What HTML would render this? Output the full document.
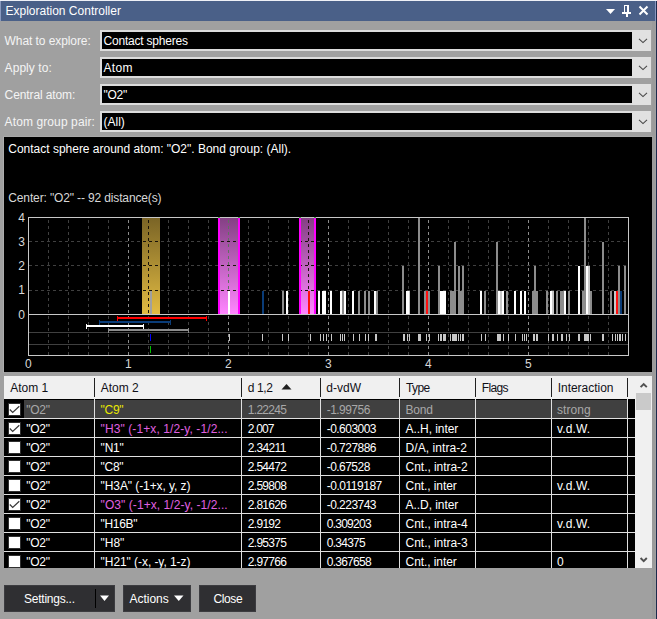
<!DOCTYPE html>
<html><head><meta charset="utf-8"><title>Exploration Controller</title>
<style>
html,body{margin:0;padding:0;background:#a0a0a0;}
body{width:657px;height:619px;background:#a0a0a0;position:relative;overflow:hidden;font-family:"Liberation Sans",sans-serif;font-size:12px;}
.a{position:absolute;}
.t{position:absolute;white-space:nowrap;line-height:16px;height:16px;font-size:12px;}
.cb{position:absolute;left:100px;width:551px;height:21px;background:#dcdcdc;}
.cb i{position:absolute;left:2px;top:2px;width:530px;height:17px;background:#000;}
.cb b{position:absolute;left:532px;top:0;width:19px;height:21px;background:#e1e1e1;}
.btn{position:absolute;top:585px;height:27px;background:#2f2f32;box-sizing:border-box;border:1px solid #3c3c40;}
.chk{position:absolute;left:8px;width:13px;height:13px;background:#fff;box-sizing:border-box;border:1px solid #303030;}
</style></head><body>

<div class="a" style="left:0;top:0;width:657px;height:1px;background:#eef0f6"></div>
<div class="a" style="left:0;top:1px;width:656px;height:20px;background:#4a6088"></div>
<div class="a" style="left:0;top:1px;width:1px;height:20px;background:#8a9abf"></div>
<div class="a" style="left:652px;top:21px;width:3px;height:598px;background:#9b9b9b"></div>
<div class="a" style="left:655px;top:1px;width:1px;height:20px;background:#8896c0"></div>
<div class="a" style="left:656px;top:1px;width:1px;height:618px;background:#1c2a4c"></div>
<svg class="a" style="left:600px;top:0" width="56" height="22" viewBox="0 0 56 22">
<polygon points="6,9 15,9 10.5,14" fill="#fff"/>
<g fill="#fff" shape-rendering="crispEdges">
<rect x="24" y="5" width="5" height="1"/><rect x="24" y="5" width="1" height="8"/><rect x="27" y="5" width="2" height="8"/>
<rect x="22" y="12" width="9" height="1.5"/><rect x="26" y="13" width="1.5" height="4"/></g>
<path d="M39.5 6.5 L47.5 14.5 M47.5 6.5 L39.5 14.5" stroke="#fff" stroke-width="2" fill="none"/>
</svg>
<div class="cb" style="top:30px"><i></i><b><svg width="19" height="21" viewBox="0 0 19 21"><path d="M7 8.8 L11 12.6 L15 8.8" stroke="#484848" stroke-width="1.1" fill="none"/></svg></b></div>
<div class="cb" style="top:57px"><i></i><b><svg width="19" height="21" viewBox="0 0 19 21"><path d="M7 8.8 L11 12.6 L15 8.8" stroke="#484848" stroke-width="1.1" fill="none"/></svg></b></div>
<div class="cb" style="top:84px"><i></i><b><svg width="19" height="21" viewBox="0 0 19 21"><path d="M7 8.8 L11 12.6 L15 8.8" stroke="#484848" stroke-width="1.1" fill="none"/></svg></b></div>
<div class="cb" style="top:111px"><i></i><b><svg width="19" height="21" viewBox="0 0 19 21"><path d="M7 8.8 L11 12.6 L15 8.8" stroke="#484848" stroke-width="1.1" fill="none"/></svg></b></div>
<div class="a" style="left:3px;top:136px;width:1px;height:237px;background:#adadad"></div>
<div class="a" style="left:3px;top:136px;width:650px;height:1px;background:#a8a8a8"></div>
<div class="a" style="left:4px;top:137px;width:648px;height:235px;background:#000"></div>
<svg class="a" style="left:0;top:0" width="657" height="619" viewBox="0 0 657 619" shape-rendering="crispEdges"><defs>
<linearGradient id="gy" x1="0" y1="0" x2="0" y2="1"><stop offset="0" stop-color="#7a6426"/><stop offset="1" stop-color="#e2bb42"/></linearGradient>
<linearGradient id="gm" x1="0" y1="0" x2="0" y2="1"><stop offset="0" stop-color="#844084"/><stop offset="1" stop-color="#ff86ff"/></linearGradient>
</defs><g><line x1="48.5" y1="220" x2="48.5" y2="355" stroke="#404040" stroke-dasharray="3,3"/><line x1="68.5" y1="220" x2="68.5" y2="355" stroke="#404040" stroke-dasharray="3,3"/><line x1="88.5" y1="220" x2="88.5" y2="355" stroke="#404040" stroke-dasharray="3,3"/><line x1="108.5" y1="220" x2="108.5" y2="355" stroke="#404040" stroke-dasharray="3,3"/><line x1="128.5" y1="220" x2="128.5" y2="355" stroke="#8c8c8c" stroke-dasharray="3,3"/><line x1="148.5" y1="220" x2="148.5" y2="355" stroke="#404040" stroke-dasharray="3,3"/><line x1="168.5" y1="220" x2="168.5" y2="355" stroke="#404040" stroke-dasharray="3,3"/><line x1="188.5" y1="220" x2="188.5" y2="355" stroke="#404040" stroke-dasharray="3,3"/><line x1="208.5" y1="220" x2="208.5" y2="355" stroke="#404040" stroke-dasharray="3,3"/><line x1="228.5" y1="220" x2="228.5" y2="355" stroke="#8c8c8c" stroke-dasharray="3,3"/><line x1="248.5" y1="220" x2="248.5" y2="355" stroke="#404040" stroke-dasharray="3,3"/><line x1="268.5" y1="220" x2="268.5" y2="355" stroke="#404040" stroke-dasharray="3,3"/><line x1="288.5" y1="220" x2="288.5" y2="355" stroke="#404040" stroke-dasharray="3,3"/><line x1="308.5" y1="220" x2="308.5" y2="355" stroke="#404040" stroke-dasharray="3,3"/><line x1="328.5" y1="220" x2="328.5" y2="355" stroke="#8c8c8c" stroke-dasharray="3,3"/><line x1="348.5" y1="220" x2="348.5" y2="355" stroke="#404040" stroke-dasharray="3,3"/><line x1="368.5" y1="220" x2="368.5" y2="355" stroke="#404040" stroke-dasharray="3,3"/><line x1="388.5" y1="220" x2="388.5" y2="355" stroke="#404040" stroke-dasharray="3,3"/><line x1="408.5" y1="220" x2="408.5" y2="355" stroke="#404040" stroke-dasharray="3,3"/><line x1="428.5" y1="220" x2="428.5" y2="355" stroke="#8c8c8c" stroke-dasharray="3,3"/><line x1="448.5" y1="220" x2="448.5" y2="355" stroke="#404040" stroke-dasharray="3,3"/><line x1="468.5" y1="220" x2="468.5" y2="355" stroke="#404040" stroke-dasharray="3,3"/><line x1="488.5" y1="220" x2="488.5" y2="355" stroke="#404040" stroke-dasharray="3,3"/><line x1="508.5" y1="220" x2="508.5" y2="355" stroke="#404040" stroke-dasharray="3,3"/><line x1="528.5" y1="220" x2="528.5" y2="355" stroke="#8c8c8c" stroke-dasharray="3,3"/><line x1="548.5" y1="220" x2="548.5" y2="355" stroke="#404040" stroke-dasharray="3,3"/><line x1="568.5" y1="220" x2="568.5" y2="355" stroke="#404040" stroke-dasharray="3,3"/><line x1="588.5" y1="220" x2="588.5" y2="355" stroke="#404040" stroke-dasharray="3,3"/><line x1="608.5" y1="220" x2="608.5" y2="355" stroke="#404040" stroke-dasharray="3,3"/><line x1="29" y1="290.5" x2="628" y2="290.5" stroke="#404040" stroke-dasharray="3,3"/><line x1="29" y1="265.5" x2="628" y2="265.5" stroke="#404040" stroke-dasharray="3,3"/><line x1="29" y1="241.5" x2="628" y2="241.5" stroke="#404040" stroke-dasharray="3,3"/></g><rect x="142" y="218" width="18" height="96" fill="url(#gy)"/><rect x="218" y="218" width="22" height="96" fill="url(#gm)"/><rect x="218" y="218" width="2" height="96" fill="#ff00ff"/><rect x="238" y="218" width="2" height="96" fill="#ff00ff"/><rect x="299" y="218" width="17" height="96" fill="url(#gm)"/><rect x="299" y="218" width="2" height="96" fill="#ff00ff"/><rect x="314" y="218" width="2" height="96" fill="#ff00ff"/><defs><clipPath id="cpb"><rect x="142" y="218" width="18" height="96"/><rect x="220" y="218" width="18" height="96"/><rect x="301" y="218" width="13" height="96"/></clipPath></defs><g clip-path="url(#cpb)"><line x1="48.5" y1="220" x2="48.5" y2="355" stroke="#181208" stroke-dasharray="3,3"/><line x1="68.5" y1="220" x2="68.5" y2="355" stroke="#181208" stroke-dasharray="3,3"/><line x1="88.5" y1="220" x2="88.5" y2="355" stroke="#181208" stroke-dasharray="3,3"/><line x1="108.5" y1="220" x2="108.5" y2="355" stroke="#181208" stroke-dasharray="3,3"/><line x1="128.5" y1="220" x2="128.5" y2="355" stroke="#607060" stroke-dasharray="3,3"/><line x1="148.5" y1="220" x2="148.5" y2="355" stroke="#181208" stroke-dasharray="3,3"/><line x1="168.5" y1="220" x2="168.5" y2="355" stroke="#181208" stroke-dasharray="3,3"/><line x1="188.5" y1="220" x2="188.5" y2="355" stroke="#181208" stroke-dasharray="3,3"/><line x1="208.5" y1="220" x2="208.5" y2="355" stroke="#181208" stroke-dasharray="3,3"/><line x1="228.5" y1="220" x2="228.5" y2="355" stroke="#607060" stroke-dasharray="3,3"/><line x1="248.5" y1="220" x2="248.5" y2="355" stroke="#181208" stroke-dasharray="3,3"/><line x1="268.5" y1="220" x2="268.5" y2="355" stroke="#181208" stroke-dasharray="3,3"/><line x1="288.5" y1="220" x2="288.5" y2="355" stroke="#181208" stroke-dasharray="3,3"/><line x1="308.5" y1="220" x2="308.5" y2="355" stroke="#181208" stroke-dasharray="3,3"/><line x1="328.5" y1="220" x2="328.5" y2="355" stroke="#607060" stroke-dasharray="3,3"/><line x1="348.5" y1="220" x2="348.5" y2="355" stroke="#181208" stroke-dasharray="3,3"/><line x1="368.5" y1="220" x2="368.5" y2="355" stroke="#181208" stroke-dasharray="3,3"/><line x1="388.5" y1="220" x2="388.5" y2="355" stroke="#181208" stroke-dasharray="3,3"/><line x1="408.5" y1="220" x2="408.5" y2="355" stroke="#181208" stroke-dasharray="3,3"/><line x1="428.5" y1="220" x2="428.5" y2="355" stroke="#607060" stroke-dasharray="3,3"/><line x1="448.5" y1="220" x2="448.5" y2="355" stroke="#181208" stroke-dasharray="3,3"/><line x1="468.5" y1="220" x2="468.5" y2="355" stroke="#181208" stroke-dasharray="3,3"/><line x1="488.5" y1="220" x2="488.5" y2="355" stroke="#181208" stroke-dasharray="3,3"/><line x1="508.5" y1="220" x2="508.5" y2="355" stroke="#181208" stroke-dasharray="3,3"/><line x1="528.5" y1="220" x2="528.5" y2="355" stroke="#607060" stroke-dasharray="3,3"/><line x1="548.5" y1="220" x2="548.5" y2="355" stroke="#181208" stroke-dasharray="3,3"/><line x1="568.5" y1="220" x2="568.5" y2="355" stroke="#181208" stroke-dasharray="3,3"/><line x1="588.5" y1="220" x2="588.5" y2="355" stroke="#181208" stroke-dasharray="3,3"/><line x1="608.5" y1="220" x2="608.5" y2="355" stroke="#181208" stroke-dasharray="3,3"/><line x1="29" y1="290.5" x2="628" y2="290.5" stroke="#181208" stroke-dasharray="3,3"/><line x1="29" y1="265.5" x2="628" y2="265.5" stroke="#181208" stroke-dasharray="3,3"/><line x1="29" y1="241.5" x2="628" y2="241.5" stroke="#181208" stroke-dasharray="3,3"/></g><rect x="150" y="291" width="2" height="23" fill="#a0a0a0"/><rect x="228" y="291" width="2" height="23" fill="#ffffff"/><rect x="262" y="291" width="2" height="23" fill="#0a3c78"/><rect x="282" y="291" width="2" height="23" fill="#8c8c8c"/><rect x="286" y="291" width="2" height="23" fill="#ffffff"/><rect x="308" y="291" width="2" height="23" fill="#ff1010"/><rect x="318" y="291" width="2" height="23" fill="#ffffff"/><rect x="322" y="291" width="4" height="23" fill="#ffffff"/><rect x="330" y="291" width="2" height="23" fill="#ffffff"/><rect x="340" y="291" width="2" height="23" fill="#ffffff"/><rect x="342" y="291" width="2" height="23" fill="#8c8c8c"/><rect x="344" y="291" width="2" height="23" fill="#ffffff"/><rect x="352" y="291" width="2" height="23" fill="#ffffff"/><rect x="358" y="291" width="2" height="23" fill="#8c8c8c"/><rect x="364" y="291" width="2" height="23" fill="#8c8c8c"/><rect x="368" y="291" width="2" height="23" fill="#8c8c8c"/><rect x="374" y="291" width="2" height="23" fill="#ffffff"/><rect x="376" y="291" width="2" height="23" fill="#8c8c8c"/><rect x="402" y="266" width="2" height="48" fill="#8c8c8c"/><rect x="406" y="291" width="3" height="23" fill="#ffffff"/><rect x="409" y="291" width="1" height="23" fill="#c8c8c8"/><rect x="418" y="218" width="2" height="96" fill="#8c8c8c"/><rect x="424" y="291" width="2" height="23" fill="#8c8c8c"/><rect x="426" y="291" width="2" height="23" fill="#ff1010"/><rect x="428" y="291" width="2" height="23" fill="#8c8c8c"/><rect x="438" y="266" width="2" height="48" fill="#8c8c8c"/><rect x="440" y="291" width="6" height="23" fill="#ffffff"/><rect x="450" y="291" width="6" height="23" fill="#8c8c8c"/><rect x="458" y="291" width="6" height="23" fill="#8c8c8c"/><rect x="454" y="242" width="2" height="72" fill="#8c8c8c"/><rect x="458" y="266" width="2" height="48" fill="#8c8c8c"/><rect x="462" y="266" width="2" height="48" fill="#8c8c8c"/><rect x="480" y="291" width="2" height="23" fill="#ffffff"/><rect x="484" y="291" width="2" height="23" fill="#8c8c8c"/><rect x="496" y="242" width="2" height="72" fill="#8c8c8c"/><rect x="498" y="291" width="2" height="23" fill="#ffffff"/><rect x="500" y="291" width="2" height="23" fill="#c8c8c8"/><rect x="502" y="291" width="2" height="23" fill="#ffffff"/><rect x="506" y="291" width="2" height="23" fill="#8c8c8c"/><rect x="514" y="291" width="2" height="23" fill="#ffffff"/><rect x="520" y="291" width="2" height="23" fill="#ffffff"/><rect x="524" y="291" width="2" height="23" fill="#ffffff"/><rect x="532" y="291" width="6" height="23" fill="#8c8c8c"/><rect x="534" y="266" width="2" height="48" fill="#8c8c8c"/><rect x="546" y="291" width="2" height="23" fill="#8c8c8c"/><rect x="550" y="291" width="2" height="23" fill="#ffffff"/><rect x="552" y="291" width="2" height="23" fill="#c8c8c8"/><rect x="556" y="291" width="2" height="23" fill="#8c8c8c"/><rect x="560" y="291" width="4" height="23" fill="#8c8c8c"/><rect x="564" y="291" width="2" height="23" fill="#ffffff"/><rect x="568" y="291" width="2" height="23" fill="#8c8c8c"/><rect x="578" y="266" width="2" height="48" fill="#ffffff"/><rect x="582" y="291" width="10" height="23" fill="#8c8c8c"/><rect x="584" y="218" width="2" height="96" fill="#8c8c8c"/><rect x="586" y="266" width="2" height="48" fill="#ffffff"/><rect x="588" y="266" width="2" height="48" fill="#c8c8c8"/><rect x="602" y="242" width="2" height="72" fill="#8c8c8c"/><rect x="610" y="291" width="2" height="23" fill="#8c8c8c"/><rect x="614" y="291" width="2" height="23" fill="#c8c8c8"/><rect x="616" y="291" width="2" height="23" fill="#ff1010"/><rect x="618" y="266" width="2" height="48" fill="#8c8c8c"/><rect x="620" y="291" width="2" height="23" fill="#0a3c78"/><rect x="624" y="266" width="2" height="48" fill="#8c8c8c"/><rect x="28.5" y="217.5" width="600" height="138" fill="none" stroke="#c8c8c8"/><rect x="218" y="217" width="2" height="1" fill="#40a040"/><rect x="238" y="217" width="2" height="1" fill="#40a040"/><rect x="299" y="217" width="2" height="1" fill="#40a040"/><rect x="314" y="217" width="2" height="1" fill="#40a040"/><rect x="28" y="314" width="601" height="1" fill="#c8c8c8"/><rect x="29" y="332" width="599" height="1" fill="#404040"/><rect x="29" y="344" width="599" height="1" fill="#404040"/><rect x="117" y="317" width="90" height="2" fill="#ff0000"/><rect x="117" y="316" width="1" height="5" fill="#ff0000"/><rect x="206" y="316" width="1" height="5" fill="#ff0000"/><rect x="99" y="321" width="72" height="2" fill="#0a3c78"/><rect x="99" y="320" width="1" height="5" fill="#0a3c78"/><rect x="170" y="320" width="1" height="5" fill="#0a3c78"/><rect x="86" y="325" width="58" height="2" fill="#ffffff"/><rect x="86" y="324" width="1" height="5" fill="#ffffff"/><rect x="143" y="324" width="1" height="5" fill="#ffffff"/><rect x="108" y="329" width="81" height="2" fill="#8c8c8c"/><rect x="108" y="328" width="1" height="5" fill="#8c8c8c"/><rect x="188" y="328" width="1" height="5" fill="#8c8c8c"/><rect x="150" y="334" width="1" height="7" fill="#0000ff"/><rect x="150" y="346" width="1" height="7" fill="#00c000"/><rect x="229" y="334" width="1" height="7" fill="#c8c8c8"/><rect x="262" y="334" width="1" height="7" fill="#c8c8c8"/><rect x="282" y="334" width="1" height="7" fill="#c8c8c8"/><rect x="288" y="334" width="1" height="7" fill="#c8c8c8"/><rect x="310" y="334" width="1" height="7" fill="#c8c8c8"/><rect x="320" y="334" width="1" height="7" fill="#c8c8c8"/><rect x="323" y="334" width="1" height="7" fill="#c8c8c8"/><rect x="326" y="334" width="1" height="7" fill="#c8c8c8"/><rect x="331" y="334" width="1" height="7" fill="#c8c8c8"/><rect x="340" y="334" width="1" height="7" fill="#c8c8c8"/><rect x="342" y="334" width="1" height="7" fill="#c8c8c8"/><rect x="344" y="334" width="1" height="7" fill="#c8c8c8"/><rect x="353" y="334" width="1" height="7" fill="#c8c8c8"/><rect x="359" y="334" width="1" height="7" fill="#c8c8c8"/><rect x="365" y="334" width="1" height="7" fill="#c8c8c8"/><rect x="368" y="334" width="1" height="7" fill="#c8c8c8"/><rect x="375" y="334" width="1" height="7" fill="#c8c8c8"/><rect x="376" y="334" width="1" height="7" fill="#c8c8c8"/><rect x="403" y="334" width="1" height="7" fill="#c8c8c8"/><rect x="404" y="334" width="1" height="7" fill="#c8c8c8"/><rect x="407" y="334" width="1" height="7" fill="#c8c8c8"/><rect x="409" y="334" width="1" height="7" fill="#c8c8c8"/><rect x="418" y="334" width="1" height="7" fill="#c8c8c8"/><rect x="419" y="334" width="1" height="7" fill="#c8c8c8"/><rect x="420" y="334" width="1" height="7" fill="#c8c8c8"/><rect x="426" y="334" width="1" height="7" fill="#c8c8c8"/><rect x="429" y="334" width="1" height="7" fill="#c8c8c8"/><rect x="438" y="334" width="1" height="7" fill="#c8c8c8"/><rect x="440" y="334" width="1" height="7" fill="#c8c8c8"/><rect x="441" y="334" width="1" height="7" fill="#c8c8c8"/><rect x="443" y="334" width="1" height="7" fill="#c8c8c8"/><rect x="444" y="334" width="1" height="7" fill="#c8c8c8"/><rect x="445" y="334" width="1" height="7" fill="#c8c8c8"/><rect x="450" y="334" width="1" height="7" fill="#c8c8c8"/><rect x="452" y="334" width="1" height="7" fill="#c8c8c8"/><rect x="453" y="334" width="1" height="7" fill="#c8c8c8"/><rect x="454" y="334" width="1" height="7" fill="#c8c8c8"/><rect x="455" y="334" width="1" height="7" fill="#c8c8c8"/><rect x="456" y="334" width="1" height="7" fill="#c8c8c8"/><rect x="458" y="334" width="1" height="7" fill="#c8c8c8"/><rect x="460" y="334" width="1" height="7" fill="#c8c8c8"/><rect x="462" y="334" width="1" height="7" fill="#c8c8c8"/><rect x="463" y="334" width="1" height="7" fill="#c8c8c8"/><rect x="481" y="334" width="1" height="7" fill="#c8c8c8"/><rect x="485" y="334" width="1" height="7" fill="#c8c8c8"/><rect x="497" y="334" width="1" height="7" fill="#c8c8c8"/><rect x="498" y="334" width="1" height="7" fill="#c8c8c8"/><rect x="499" y="334" width="1" height="7" fill="#c8c8c8"/><rect x="500" y="334" width="1" height="7" fill="#c8c8c8"/><rect x="503" y="334" width="1" height="7" fill="#c8c8c8"/><rect x="508" y="334" width="1" height="7" fill="#c8c8c8"/><rect x="515" y="334" width="1" height="7" fill="#c8c8c8"/><rect x="522" y="334" width="1" height="7" fill="#c8c8c8"/><rect x="524" y="334" width="1" height="7" fill="#c8c8c8"/><rect x="526" y="334" width="1" height="7" fill="#c8c8c8"/><rect x="533" y="334" width="1" height="7" fill="#c8c8c8"/><rect x="534" y="334" width="1" height="7" fill="#c8c8c8"/><rect x="536" y="334" width="1" height="7" fill="#c8c8c8"/><rect x="537" y="334" width="1" height="7" fill="#c8c8c8"/><rect x="548" y="334" width="1" height="7" fill="#c8c8c8"/><rect x="552" y="334" width="1" height="7" fill="#c8c8c8"/><rect x="553" y="334" width="1" height="7" fill="#c8c8c8"/><rect x="557" y="334" width="1" height="7" fill="#c8c8c8"/><rect x="561" y="334" width="1" height="7" fill="#c8c8c8"/><rect x="562" y="334" width="1" height="7" fill="#c8c8c8"/><rect x="566" y="334" width="1" height="7" fill="#c8c8c8"/><rect x="569" y="334" width="1" height="7" fill="#c8c8c8"/><rect x="578" y="334" width="1" height="7" fill="#c8c8c8"/><rect x="579" y="334" width="1" height="7" fill="#c8c8c8"/><rect x="584" y="334" width="1" height="7" fill="#c8c8c8"/><rect x="585" y="334" width="1" height="7" fill="#c8c8c8"/><rect x="586" y="334" width="1" height="7" fill="#c8c8c8"/><rect x="587" y="334" width="1" height="7" fill="#c8c8c8"/><rect x="588" y="334" width="1" height="7" fill="#c8c8c8"/><rect x="590" y="334" width="1" height="7" fill="#c8c8c8"/><rect x="602" y="334" width="1" height="7" fill="#c8c8c8"/><rect x="603" y="334" width="1" height="7" fill="#c8c8c8"/><rect x="612" y="334" width="1" height="7" fill="#c8c8c8"/><rect x="615" y="334" width="1" height="7" fill="#c8c8c8"/><rect x="617" y="334" width="1" height="7" fill="#c8c8c8"/><rect x="619" y="334" width="1" height="7" fill="#c8c8c8"/><rect x="620" y="334" width="1" height="7" fill="#c8c8c8"/><rect x="622" y="334" width="1" height="7" fill="#c8c8c8"/><rect x="625" y="334" width="1" height="7" fill="#c8c8c8"/></svg>
<div class="a" style="left:4px;top:376px;width:648px;height:23px;background:#f0f0f0"></div>
<div class="a" style="left:4px;top:399px;width:631px;height:169px;background:#000"></div>
<div class="a" style="left:635px;top:376px;width:17px;height:192px;background:#f0f0f0"></div>
<div class="a" style="left:636px;top:393px;width:15px;height:17px;background:#cacaca"></div>
<svg class="a" style="left:636px;top:551px" width="16" height="17" viewBox="0 0 16 17"><path d="M4.6 7 L7.7 10.2 L10.8 7" stroke="#505050" stroke-width="1.9" fill="none"/></svg>
<svg class="a" style="left:636px;top:376px" width="16" height="17" viewBox="0 0 16 17"><path d="M4.6 11.2 L7.7 8 L10.8 11.2" stroke="#505050" stroke-width="1.9" fill="none"/></svg>
<div class="a" style="left:24px;top:400px;width:603px;height:18px;background:#404040"></div>
<div class="a" style="left:4px;top:418px;width:631px;height:1px;background:#e0e0e0"></div>
<div class="a" style="left:4px;top:437px;width:631px;height:1px;background:#e0e0e0"></div>
<div class="a" style="left:4px;top:456px;width:631px;height:1px;background:#e0e0e0"></div>
<div class="a" style="left:4px;top:475px;width:631px;height:1px;background:#e0e0e0"></div>
<div class="a" style="left:4px;top:494px;width:631px;height:1px;background:#e0e0e0"></div>
<div class="a" style="left:4px;top:513px;width:631px;height:1px;background:#e0e0e0"></div>
<div class="a" style="left:4px;top:532px;width:631px;height:1px;background:#e0e0e0"></div>
<div class="a" style="left:4px;top:551px;width:631px;height:1px;background:#e0e0e0"></div>
<div class="a" style="left:94px;top:378px;width:1px;height:19px;background:#202020"></div>
<div class="a" style="left:94px;top:399px;width:1px;height:169px;background:#e0e0e0"></div>
<div class="a" style="left:241px;top:378px;width:1px;height:19px;background:#202020"></div>
<div class="a" style="left:241px;top:399px;width:1px;height:169px;background:#e0e0e0"></div>
<div class="a" style="left:320px;top:378px;width:1px;height:19px;background:#202020"></div>
<div class="a" style="left:320px;top:399px;width:1px;height:169px;background:#e0e0e0"></div>
<div class="a" style="left:399px;top:378px;width:1px;height:19px;background:#202020"></div>
<div class="a" style="left:399px;top:399px;width:1px;height:169px;background:#e0e0e0"></div>
<div class="a" style="left:475px;top:378px;width:1px;height:19px;background:#202020"></div>
<div class="a" style="left:475px;top:399px;width:1px;height:169px;background:#e0e0e0"></div>
<div class="a" style="left:551px;top:378px;width:1px;height:19px;background:#202020"></div>
<div class="a" style="left:551px;top:399px;width:1px;height:169px;background:#e0e0e0"></div>
<div class="a" style="left:627px;top:378px;width:1px;height:19px;background:#202020"></div>
<div class="a" style="left:627px;top:399px;width:1px;height:169px;background:#e0e0e0"></div>
<div class="chk" style="top:403px"><svg width="13" height="13" viewBox="0 0 13 13" style="position:absolute;left:-1px;top:-1px"><path d="M1.8 6.5 L4.7 9.4 L11.3 3.2" stroke="#383838" stroke-width="1.2" fill="none"/></svg></div>
<div class="chk" style="top:422px"><svg width="13" height="13" viewBox="0 0 13 13" style="position:absolute;left:-1px;top:-1px"><path d="M1.8 6.5 L4.7 9.4 L11.3 3.2" stroke="#383838" stroke-width="1.2" fill="none"/></svg></div>
<div class="chk" style="top:441px"></div>
<div class="chk" style="top:460px"></div>
<div class="chk" style="top:479px"></div>
<div class="chk" style="top:498px"><svg width="13" height="13" viewBox="0 0 13 13" style="position:absolute;left:-1px;top:-1px"><path d="M1.8 6.5 L4.7 9.4 L11.3 3.2" stroke="#383838" stroke-width="1.2" fill="none"/></svg></div>
<div class="chk" style="top:517px"></div>
<div class="chk" style="top:536px"></div>
<div class="chk" style="top:555px"></div>
<svg class="a" style="left:281px;top:383px" width="11" height="7" viewBox="0 0 11 7"><polygon points="0.5,6.5 10.5,6.5 5.5,1" fill="#202020"/></svg>
<div class="a" style="left:0;top:568px;width:652px;height:51px;background:#a0a0a0"></div>
<div class="btn" style="left:4px;width:111px"></div>
<div class="a" style="left:95px;top:589px;width:1px;height:19px;background:#000"></div>
<svg class="a" style="left:100px;top:595px" width="10" height="7" viewBox="0 0 10 7"><polygon points="0,0.5 9,0.5 4.5,6" fill="#fff"/></svg>
<div class="btn" style="left:123px;width:68px"></div>
<svg class="a" style="left:174px;top:595px" width="10" height="7" viewBox="0 0 10 7"><polygon points="0,0.5 9.5,0.5 4.75,6" fill="#fff"/></svg>
<div class="btn" style="left:199px;width:57px"></div>
<div class="a" style="left:0;top:0;width:657px;height:568px;overflow:hidden">
<div class="t" id="t18" style="left:26.2px;top:401.8px;color:#a8a8a8;letter-spacing:-0.258px;">&quot;O2&quot;</div>
<div class="t" id="t19" style="left:100.6px;top:401.8px;color:#e8e800;letter-spacing:-0.315px;">&quot;C9&quot;</div>
<div class="t" id="t20" style="left:247.8px;top:401.8px;color:#a8a8a8;letter-spacing:-0.713px;">1.22245</div>
<div class="t" id="t21" style="left:326.7px;top:401.8px;color:#a8a8a8;letter-spacing:-0.534px;">-1.99756</div>
<div class="t" id="t22" style="left:405.6px;top:401.8px;color:#a8a8a8;letter-spacing:-0.258px;">Bond</div>
<div class="t" id="t23" style="left:557.1px;top:401.8px;color:#a8a8a8;letter-spacing:0.023px;">strong</div>
<div class="t" id="t24" style="left:26.2px;top:420.8px;color:#ffffff;letter-spacing:-0.258px;">&quot;O2&quot;</div>
<div class="t" id="t25" style="left:100.6px;top:420.8px;color:#e060e0;letter-spacing:0.093px;">&quot;H3&quot; (-1+x, 1/2-y, -1/2...</div>
<div class="t" id="t26" style="left:247.8px;top:420.8px;color:#ffffff;letter-spacing:-0.826px;">2.007</div>
<div class="t" id="t27" style="left:326.7px;top:420.8px;color:#ffffff;letter-spacing:-0.527px;">-0.603003</div>
<div class="t" id="t28" style="left:405.6px;top:420.8px;color:#ffffff;letter-spacing:-0.069px;">A..H, inter</div>
<div class="t" id="t29" style="left:557.1px;top:420.8px;color:#ffffff;letter-spacing:0.091px;">v.d.W.</div>
<div class="t" id="t30" style="left:26.2px;top:439.8px;color:#ffffff;letter-spacing:-0.258px;">&quot;O2&quot;</div>
<div class="t" id="t31" style="left:100.6px;top:439.8px;color:#fff;letter-spacing:-0.215px;">&quot;N1&quot;</div>
<div class="t" id="t32" style="left:247.8px;top:439.8px;color:#ffffff;letter-spacing:-0.643px;">2.34211</div>
<div class="t" id="t33" style="left:326.7px;top:439.8px;color:#ffffff;letter-spacing:-0.527px;">-0.727886</div>
<div class="t" id="t34" style="left:405.6px;top:439.8px;color:#ffffff;letter-spacing:0.059px;">D/A, intra-2</div>
<div class="t" id="t35" style="left:26.2px;top:458.8px;color:#ffffff;letter-spacing:-0.258px;">&quot;O2&quot;</div>
<div class="t" id="t36" style="left:100.6px;top:458.8px;color:#fff;letter-spacing:-0.315px;">&quot;C8&quot;</div>
<div class="t" id="t37" style="left:247.8px;top:458.8px;color:#ffffff;letter-spacing:-0.713px;">2.54472</div>
<div class="t" id="t38" style="left:326.7px;top:458.8px;color:#ffffff;letter-spacing:-0.534px;">-0.67528</div>
<div class="t" id="t39" style="left:405.6px;top:458.8px;color:#ffffff;letter-spacing:-0.046px;">Cnt., intra-2</div>
<div class="t" id="t40" style="left:26.2px;top:477.8px;color:#ffffff;letter-spacing:-0.258px;">&quot;O2&quot;</div>
<div class="t" id="t41" style="left:100.6px;top:477.8px;color:#fff;letter-spacing:-0.084px;">&quot;H3A&quot; (-1+x, y, z)</div>
<div class="t" id="t42" style="left:247.8px;top:477.8px;color:#ffffff;letter-spacing:-0.713px;">2.59808</div>
<div class="t" id="t43" style="left:326.7px;top:477.8px;color:#ffffff;letter-spacing:-0.474px;">-0.0119187</div>
<div class="t" id="t44" style="left:405.6px;top:477.8px;color:#ffffff;letter-spacing:-0.085px;">Cnt., inter</div>
<div class="t" id="t45" style="left:557.1px;top:477.8px;color:#ffffff;letter-spacing:0.091px;">v.d.W.</div>
<div class="t" id="t46" style="left:26.2px;top:496.8px;color:#ffffff;letter-spacing:-0.258px;">&quot;O2&quot;</div>
<div class="t" id="t47" style="left:100.6px;top:496.8px;color:#e060e0;letter-spacing:0.068px;">&quot;O3&quot; (-1+x, 1/2-y, -1/2...</div>
<div class="t" id="t48" style="left:247.8px;top:496.8px;color:#ffffff;letter-spacing:-0.713px;">2.81626</div>
<div class="t" id="t49" style="left:326.7px;top:496.8px;color:#ffffff;letter-spacing:-0.527px;">-0.223743</div>
<div class="t" id="t50" style="left:405.6px;top:496.8px;color:#ffffff;letter-spacing:-0.069px;">A..D, inter</div>
<div class="t" id="t51" style="left:26.2px;top:515.8px;color:#ffffff;letter-spacing:-0.258px;">&quot;O2&quot;</div>
<div class="t" id="t52" style="left:100.6px;top:515.8px;color:#fff;letter-spacing:-0.341px;">&quot;H16B&quot;</div>
<div class="t" id="t53" style="left:247.8px;top:515.8px;color:#ffffff;letter-spacing:-0.701px;">2.9192</div>
<div class="t" id="t54" style="left:326.7px;top:515.8px;color:#ffffff;letter-spacing:-0.733px;">0.309203</div>
<div class="t" id="t55" style="left:405.6px;top:515.8px;color:#ffffff;letter-spacing:-0.046px;">Cnt., intra-4</div>
<div class="t" id="t56" style="left:557.1px;top:515.8px;color:#ffffff;letter-spacing:0.091px;">v.d.W.</div>
<div class="t" id="t57" style="left:26.2px;top:534.8px;color:#ffffff;letter-spacing:-0.258px;">&quot;O2&quot;</div>
<div class="t" id="t58" style="left:100.6px;top:534.8px;color:#fff;letter-spacing:-0.040px;">&quot;H8&quot;</div>
<div class="t" id="t59" style="left:247.8px;top:534.8px;color:#ffffff;letter-spacing:-0.713px;">2.95375</div>
<div class="t" id="t60" style="left:326.7px;top:534.8px;color:#ffffff;letter-spacing:-0.727px;">0.34375</div>
<div class="t" id="t61" style="left:405.6px;top:534.8px;color:#ffffff;letter-spacing:-0.046px;">Cnt., intra-3</div>
<div class="t" id="t62" style="left:26.2px;top:553.8px;color:#ffffff;letter-spacing:-0.258px;">&quot;O2&quot;</div>
<div class="t" id="t63" style="left:100.6px;top:553.8px;color:#fff;letter-spacing:-0.062px;">&quot;H21&quot; (-x, -y, 1-z)</div>
<div class="t" id="t64" style="left:247.8px;top:553.8px;color:#ffffff;letter-spacing:-0.713px;">2.97766</div>
<div class="t" id="t65" style="left:326.7px;top:553.8px;color:#ffffff;letter-spacing:-0.733px;">0.367658</div>
<div class="t" id="t66" style="left:405.6px;top:553.8px;color:#ffffff;letter-spacing:-0.085px;">Cnt., inter</div>
<div class="t" id="t67" style="left:557.1px;top:553.8px;color:#ffffff;">0</div>
</div>
<div class="t" id="t0" style="left:5.5px;top:2.8px;color:#ffffff;letter-spacing:0.000px;">Exploration Controller</div>
<div class="t" id="t1" style="left:4.6px;top:33.3px;color:#f4f4f4;letter-spacing:-0.080px;">What to explore:</div>
<div class="t" id="t2" style="left:4.6px;top:60.3px;color:#f4f4f4;letter-spacing:0.055px;">Apply to:</div>
<div class="t" id="t3" style="left:4.6px;top:87.3px;color:#f4f4f4;letter-spacing:-0.110px;">Central atom:</div>
<div class="t" id="t4" style="left:4.6px;top:114.3px;color:#f4f4f4;letter-spacing:0.105px;">Atom group pair:</div>
<div class="t" id="t5" style="left:103.5px;top:33.3px;color:#ffffff;letter-spacing:-0.206px;">Contact spheres</div>
<div class="t" id="t6" style="left:103.5px;top:60.3px;color:#ffffff;letter-spacing:0.296px;">Atom</div>
<div class="t" id="t7" style="left:103.5px;top:87.3px;color:#ffffff;letter-spacing:-0.258px;">&quot;O2&quot;</div>
<div class="t" id="t8" style="left:103.5px;top:114.3px;color:#ffffff;letter-spacing:-0.006px;">(All)</div>
<div class="t" id="t9" style="left:8.3px;top:141.1px;color:#ffffff;letter-spacing:-0.010px;">Contact sphere around atom: &quot;O2&quot;. Bond group: (All).</div>
<div class="t" id="t10" style="left:8.3px;top:189.6px;color:#d8d8d8;letter-spacing:-0.138px;">Center: &quot;O2&quot; -- 92 distance(s)</div>
<div class="t" id="t11" style="left:10.2px;top:380.3px;color:#101018;letter-spacing:-0.003px;">Atom 1</div>
<div class="t" id="t12" style="left:100.7px;top:380.3px;color:#101018;letter-spacing:-0.003px;">Atom 2</div>
<div class="t" id="t13" style="left:247.8px;top:380.3px;color:#101018;letter-spacing:-0.421px;">d 1,2</div>
<div class="t" id="t14" style="left:326.2px;top:380.3px;color:#101018;letter-spacing:0.066px;">d-vdW</div>
<div class="t" id="t15" style="left:406.0px;top:380.3px;color:#101018;letter-spacing:-0.604px;">Type</div>
<div class="t" id="t16" style="left:481.8px;top:380.3px;color:#101018;letter-spacing:-0.629px;">Flags</div>
<div class="t" id="t17" style="left:557.7px;top:380.3px;color:#101018;letter-spacing:-0.022px;">Interaction</div>
<div class="t" id="t68" style="left:24.0px;top:590.5px;color:#ffffff;letter-spacing:-0.234px;">Settings...</div>
<div class="t" id="t69" style="left:129.5px;top:590.5px;color:#ffffff;letter-spacing:-0.023px;">Actions</div>
<div class="t" id="t70" style="left:213.5px;top:590.5px;color:#ffffff;letter-spacing:-0.377px;">Close</div>
<div class="t" id="t71" style="left:18.2px;top:306.6px;color:#d8d8d8;">0</div>
<div class="t" id="t72" style="left:18.2px;top:282.4px;color:#d8d8d8;">1</div>
<div class="t" id="t73" style="left:18.2px;top:258.1px;color:#d8d8d8;">2</div>
<div class="t" id="t74" style="left:18.2px;top:233.9px;color:#d8d8d8;">3</div>
<div class="t" id="t75" style="left:18.2px;top:209.6px;color:#d8d8d8;">4</div>
<div class="t" id="t76" style="left:24.9px;top:356.3px;color:#d8d8d8;">0</div>
<div class="t" id="t77" style="left:124.9px;top:356.3px;color:#d8d8d8;">1</div>
<div class="t" id="t78" style="left:224.9px;top:356.3px;color:#d8d8d8;">2</div>
<div class="t" id="t79" style="left:324.9px;top:356.3px;color:#d8d8d8;">3</div>
<div class="t" id="t80" style="left:424.9px;top:356.3px;color:#d8d8d8;">4</div>
<div class="t" id="t81" style="left:524.9px;top:356.3px;color:#d8d8d8;">5</div>
</body></html>
